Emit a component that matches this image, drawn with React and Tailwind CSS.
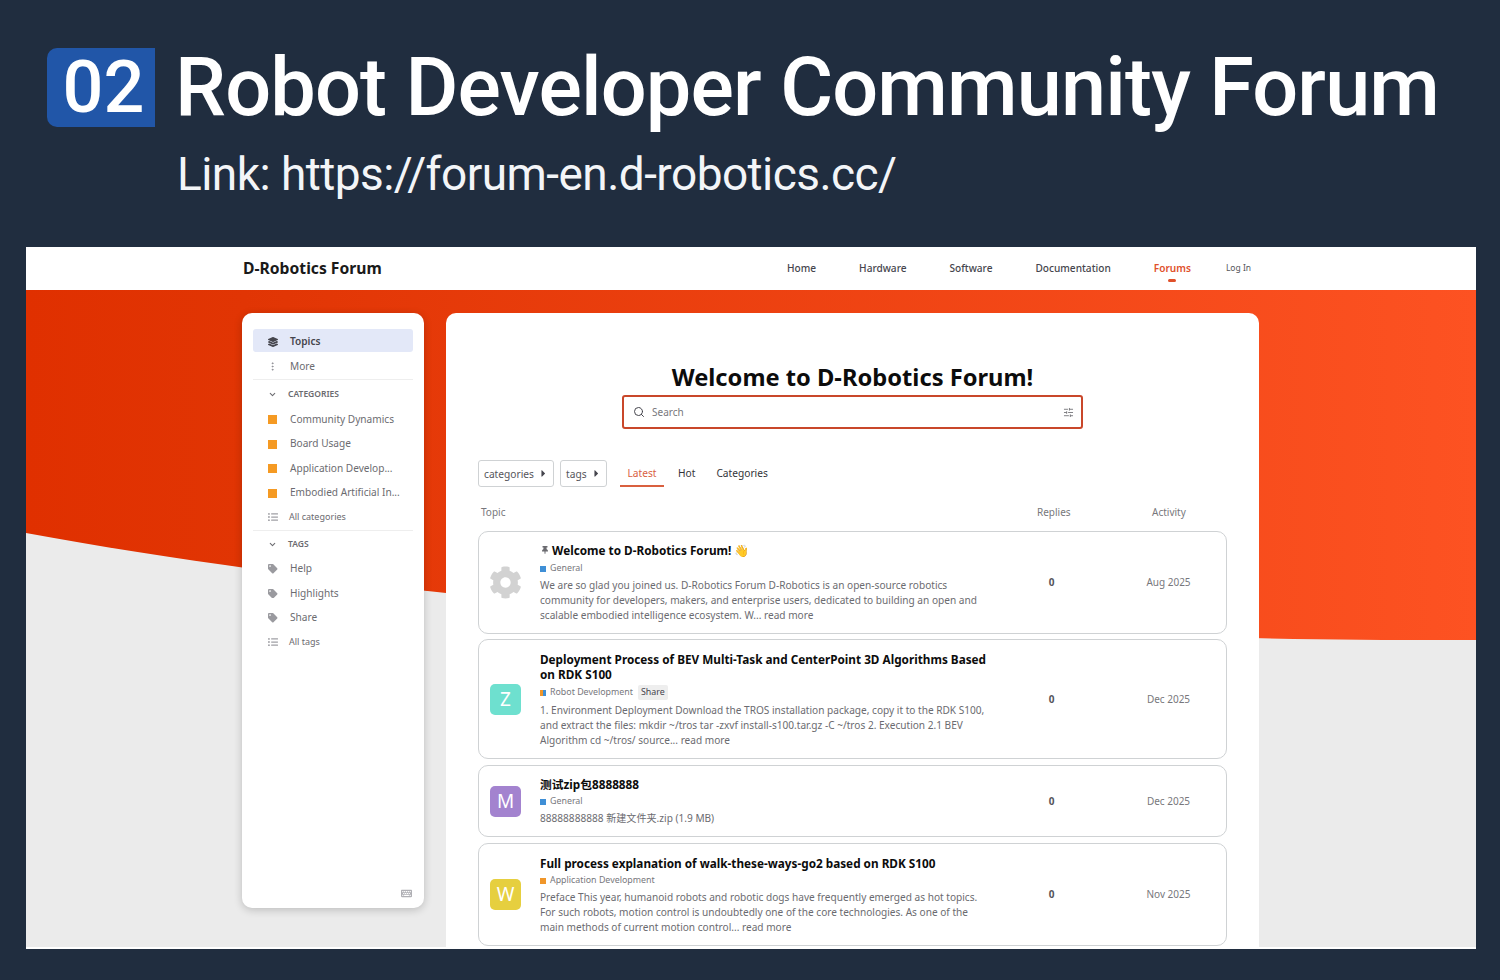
import React from "react";
import { Search, SlidersHorizontal, ChevronDown, EllipsisVertical } from "lucide-react";
import { FaCog, FaThumbtack, FaTag, FaLayerGroup, FaListUl, FaKeyboard, FaCaretRight } from "react-icons/fa";

const categories = ["Community Dynamics", "Board Usage", "Application Develop...", "Embodied Artificial In..."];
const tags = ["Help", "Highlights", "Share"];

const topics = [
  {
    id: 1,
    box: "h-[103px] mb-[5px]",
    pt: "pt-[11px]",
    catMt: "mt-[3px]",
    exMt: "mt-[2px]",
    title: "Welcome to D-Robotics Forum!",
    pinned: true,
    cat: "General",
    catColor: "bg-[#3f8fd6]",
    excerpt: [
      "We are so glad you joined us. D-Robotics Forum D-Robotics is an open-source robotics",
      "community for developers, makers, and enterprise users, dedicated to building an open and",
      "scalable embodied intelligence ecosystem. W... read more",
    ],
    date: "Aug 2025",
  },
  {
    id: 2,
    box: "h-[120px] mb-[6px]",
    pt: "pt-[12px]",
    catMt: "mt-[3px]",
    exMt: "mt-[3px]",
    title: "Deployment Process of BEV Multi-Task and CenterPoint 3D Algorithms Based on RDK S100",
    letter: "Z",
    color: "bg-[#6ee0cf]",
    cat: "Robot Development",
    catColor: "bg-[linear-gradient(90deg,#f0962a_50%,#3f8fd6_50%)]",
    tag: "Share",
    excerpt: [
      "1. Environment Deployment Download the TROS installation package, copy it to the RDK S100,",
      "and extract the files: mkdir ~/tros tar -zxvf install-s100.tar.gz -C ~/tros 2. Execution 2.1 BEV",
      "Algorithm cd ~/tros/ source... read more",
    ],
    date: "Dec 2025",
  },
  {
    id: 3,
    box: "h-[72px] mb-[6px]",
    pt: "pt-[11px]",
    catMt: "mt-[2px]",
    exMt: "mt-[2px]",
    title: "测试zip包8888888",
    letter: "M",
    color: "bg-[#a383cf]",
    cat: "General",
    catColor: "bg-[#3f8fd6]",
    excerpt: ["88888888888 新建文件夹.zip (1.9 MB)"],
    date: "Dec 2025",
  },
  {
    id: 4,
    box: "h-[103px]",
    pt: "pt-[12px]",
    catMt: "mt-[2px]",
    exMt: "mt-[2px]",
    title: "Full process explanation of walk-these-ways-go2 based on RDK S100",
    letter: "W",
    color: "bg-[#e6cf3f]",
    cat: "Application Development",
    catColor: "bg-[#f0962a]",
    excerpt: [
      "Preface This year, humanoid robots and robotic dogs have frequently emerged as hot topics.",
      "For such robots, motion control is undoubtedly one of the core technologies. As one of the",
      "main methods of current motion control... read more",
    ],
    date: "Nov 2025",
  },
];

const SideRow = ({ icon, label, active, small }) => (
  <div className={`flex items-center rounded-[3px] h-[23px] pt-[2px] pl-[15px] mb-[1.5px] ${active ? "bg-[#e3e8f8]" : ""}`}>
    <span className={`w-[22px] flex items-center text-[#8a8a90] ${small ? "-mt-[2px]" : ""}`}>{icon}</span>
    <span className={`${small ? "text-[9px] -ml-[1px] -mt-[2px]" : "text-[10.1px]"} ${active ? "font-semibold text-[#45454d]" : "text-[#6b6b70]"}`}>{label}</span>
  </div>
);

const SideHeader = ({ label, h }) => (
  <div className={`flex items-center ${h} pt-[2px] pl-[15px]`}>
    <ChevronDown size={9} strokeWidth={2.8} className="text-[#6b6b70] mr-[11px]" />
    <span className="text-[8.5px] font-semibold text-[#6b6b70]">{label}</span>
  </div>
);

const Sidebar = () => (
  <aside className="w-[182px] h-[595px] shrink-0 bg-white rounded-[10px] shadow-[0_2px_8px_rgba(0,0,0,0.2)] px-[11px] pt-[16px] relative">
    <SideRow active icon={<FaLayerGroup size={10} className="text-[#45454d]" />} label="Topics" />
    <div className="mt-[2px]">
      <SideRow icon={<EllipsisVertical size={11} className="-ml-[1px]" />} label="More" />
    </div>
    <div className="border-t border-[#eeeeee] mt-[2px]" />
    <SideHeader label="CATEGORIES" h="h-[27px]" />
    {categories.map((c) => (
      <SideRow key={c} icon={<span className="w-[9px] h-[9px] bg-[#f59a23] block" />} label={c} />
    ))}
    <SideRow small icon={<FaListUl size={10} className="text-[#a0a0a5]" />} label="All categories" />
    <div className="border-t border-[#eeeeee] mt-[1.5px]" />
    <SideHeader label="TAGS" h="h-[26px]" />
    {tags.map((t) => (
      <SideRow key={t} icon={<FaTag size={9.5} className="text-[#9a9a9f]" />} label={t} />
    ))}
    <SideRow small icon={<FaListUl size={10} className="text-[#a0a0a5]" />} label="All tags" />
    <FaKeyboard size={11} className="absolute right-[12px] bottom-[9px] text-[#b0b0b5]" />
  </aside>
);

const TopicRow = ({ t }) => (
  <div className={`${t.box} flex rounded-[10px] border border-[#cfd2d4] bg-white`}>
    <div className="w-[53px] mr-[8px] shrink-0 flex items-center justify-center">
      {t.letter ? (
        <span className={`w-[31px] h-[31px] rounded-[5px] ${t.color} text-white text-[19px] flex items-center justify-center`}>{t.letter}</span>
      ) : (
        <FaCog size={33} className="text-[#d2d2d2]" />
      )}
    </div>
    <div className={`w-[470px] shrink-0 ${t.pt}`}>
      <div className="text-[11.75px] leading-[15px] font-bold text-[#0c0c0c] w-[450px]">
        {t.pinned && <FaThumbtack size={8} className="inline text-[#6b6b70] mr-[3px] -mt-[3px] ml-[1px]" />}
        {t.title}
        {t.pinned && <span className="text-[12px] leading-[12px] ml-[3px]">👋</span>}
      </div>
      <div className={`flex items-center h-[15px] text-[8.85px] text-[#77777c] ${t.catMt}`}>
        <span className={`w-[6px] h-[6px] mr-[4px] ${t.catColor}`} />
        {t.cat}
        {t.tag && <span className="ml-[5px] bg-[#eeeeee] px-[3px] py-[1px] rounded-[2px] text-[#45454d]">{t.tag}</span>}
      </div>
      <div className={`text-[10.1px] leading-[15.2px] text-[#6b6b70] ${t.exMt}`}>
        {t.excerpt.map((line) => (
          <div key={line} className="whitespace-nowrap">{line}</div>
        ))}
      </div>
    </div>
    <div className="flex items-center flex-1">
      <span className="w-[83px] text-center text-[10px] font-bold text-[#55555a]">0</span>
      <span className="w-[151px] text-center text-[10px] text-[#77777c]">{t.date}</span>
    </div>
  </div>
);

const Main = () => (
  <main className="w-[813px] h-[636px] bg-white rounded-t-[10px] overflow-hidden px-[32px] ml-[22px]">
    <h1 className="text-center text-[23.7px] leading-[28px] font-bold text-[#0c0c0c] mt-[50px]">Welcome to D-Robotics Forum!</h1>
    <div className="mx-auto mt-[4px] w-[461px] h-[34px] rounded-[3px] border-2 border-[#c9472a] flex items-center pl-[9px] pr-[7px]">
      <Search size={12} className="text-[#45454d]" />
      <span className="text-[10px] text-[#77777c] ml-[7px] flex-1">Search</span>
      <SlidersHorizontal size={11} className="text-[#77777c]" />
    </div>
    <div className="flex items-center mt-[31px] h-[27px]">
      <div className="h-[27px] w-[76px] border border-[#cfd2d4] rounded-[3px] flex items-center justify-between pl-[5px] pr-[4px] pt-[2px] text-[10.2px] text-[#55555a]">
        categories<FaCaretRight size={11} className="text-[#45454d] -mt-[2px]" />
      </div>
      <div className="h-[27px] w-[47px] ml-[6px] border border-[#cfd2d4] rounded-[3px] flex items-center justify-between pl-[5px] pr-[4px] pt-[2px] text-[10.2px] text-[#55555a]">
        tags<FaCaretRight size={11} className="text-[#45454d] -mt-[2px]" />
      </div>
      <div className="ml-[13px] w-[44px] h-[27px] border-b-2 border-[#d9603f] text-[#d9603f] text-[10.2px] pt-[3px] flex items-center justify-center">Latest</div>
      <span className="ml-[14px] text-[10.2px] text-[#333338]">Hot</span>
      <span className="ml-[21px] text-[10.2px] text-[#333338]">Categories</span>
    </div>
    <div className="flex items-center h-[16px] mt-[17px] mb-[11px] text-[10px] text-[#77777c]">
      <span className="w-[559px] pl-[3px]">Topic</span>
      <span className="w-[33px]">Replies</span>
      <span className="ml-[82px]">Activity</span>
    </div>
    {topics.map((t) => (
      <TopicRow key={t.id} t={t} />
    ))}
  </main>
);

const App = () => (
  <div className="w-[1500px] h-[980px] bg-[#202d3f] overflow-hidden font-['Noto_Sans','Noto_Sans_CJK_SC',sans-serif]">
    <header className="h-[247px] pl-[47px] pt-[48px]">
      <div className="flex items-center h-[79px]">
        <span className="w-[108px] h-[79px] pl-[5px] bg-[#2156a8] rounded-l-[10px] text-white flex items-center justify-center font-['Roboto',sans-serif] font-medium text-[72px]">02</span>
        <span className="ml-[20px] text-white whitespace-nowrap font-['Roboto',sans-serif] font-medium text-[81px] tracking-[-0.84px]">Robot Developer Community Forum</span>
      </div>
      <p className="ml-[130px] mt-[19px] text-[#f3f5f8] font-['Roboto',sans-serif] text-[46px] leading-[56px] tracking-[-0.55px]">Link: https://forum-en.d-robotics.cc/</p>
    </header>
    <section className="w-[1450px] h-[702px] ml-[26px] bg-white relative overflow-hidden">
      <nav className="h-[43px] bg-white flex items-center pl-[217px] relative z-10">
        <span className="text-[15.7px] font-bold text-[#1a1a1a] w-[544px]">D-Robotics Forum</span>
        <div className="flex items-center gap-[43px] text-[10.1px] font-medium text-[#45454d]">
          <span>Home</span>
          <span>Hardware</span>
          <span>Software</span>
          <span>Documentation</span>
          <span className="relative font-semibold text-[#e0502a]">
            Forums
            <span className="absolute left-[14px] -bottom-[6px] w-[8px] h-[3px] rounded-full bg-[#e0502a]" />
          </span>
        </div>
        <span className="ml-[35px] text-[8.5px] text-[#55555a]">Log In</span>
      </nav>
      <svg className="absolute left-0 top-[43px]" width="1450" height="659" viewBox="0 0 1450 659" preserveAspectRatio="none">
        <defs>
          <linearGradient id="hero" x1="0" y1="0" x2="1" y2="0">
            <stop offset="0" stopColor="#e03000" />
            <stop offset="0.15" stopColor="#e13504" />
            <stop offset="1" stopColor="#fd5222" />
          </linearGradient>
        </defs>
        <rect width="1450" height="659" fill="#ebebeb" />
        <path d="M0 0H1450V350C1200 351 800 340 420 303C260 285 120 265 0 243Z" fill="url(#hero)" />
      </svg>
      <div className="relative flex pl-[216px] pt-[23px]">
        <Sidebar />
        <Main />
      </div>
      <div className="absolute left-0 right-0 bottom-0 h-[2px] bg-white" />
    </section>
  </div>
);

export default App;
